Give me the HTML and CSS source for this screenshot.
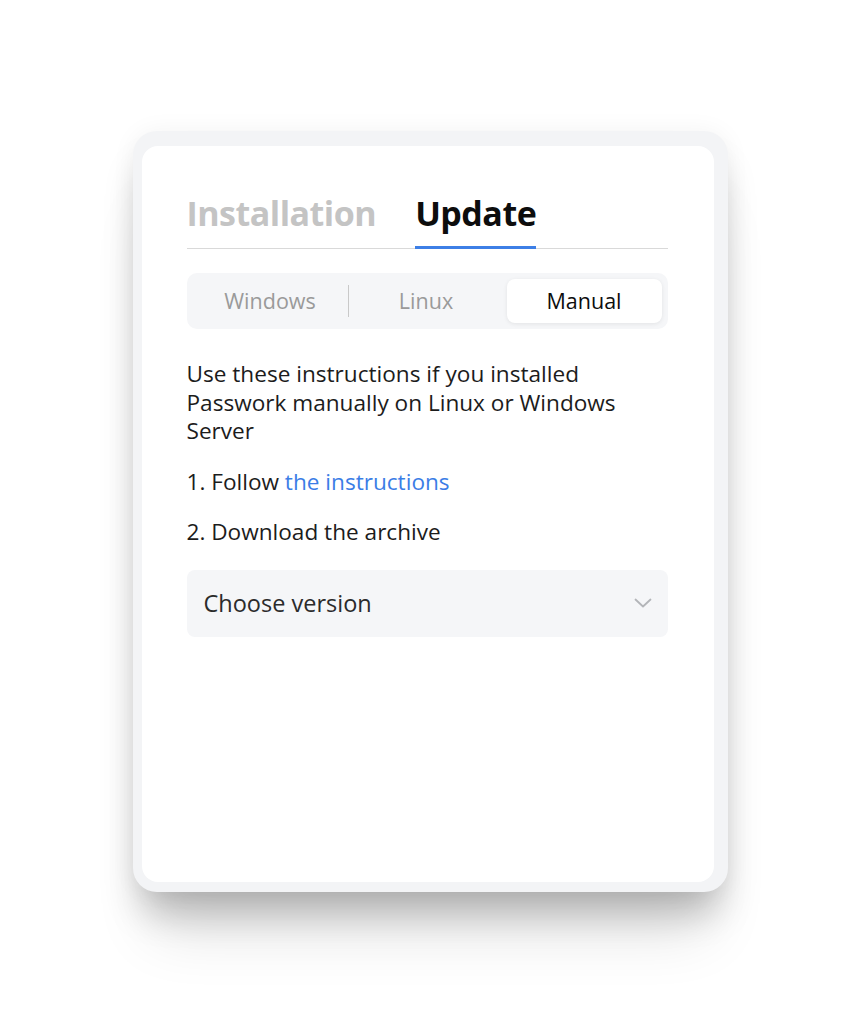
FILE: index.html
```html
<!DOCTYPE html>
<html lang="en">
<head>
<meta charset="utf-8">
<title>Update</title>
<link rel="stylesheet" href="styles.css">
</head>
<body>
<div class="stage">
  <div class="frame">
    <div class="card">
      <div class="tabs">
        <div class="tab">Installation</div>
        <div class="tab tab-active">Update</div>
      </div>
      <div class="segmented">
        <div class="seg">Windows</div>
        <div class="seg-divider"></div>
        <div class="seg">Linux</div>
        <div class="seg seg-active">Manual</div>
      </div>
      <p class="intro">Use these instructions if you installed Passwork manually on Linux or Windows Server</p>
      <p class="step">1. Follow <a class="link" href="#">the instructions</a></p>
      <p class="step">2. Download the archive</p>
      <div class="select">
        <span class="select-label">Choose version</span>
        <svg class="chevron" width="18" height="10" viewBox="0 0 18 10"><path d="M1.5 1.5 L9 8.5 L16.5 1.5" fill="none" stroke="#b3b5b9" stroke-width="1.8" stroke-linecap="round" stroke-linejoin="round"/></svg>
      </div>
    </div>
  </div>
</div>
</body>
</html>
```
FILE: styles.css
```css
* { box-sizing: border-box; }
html, body { margin: 0; padding: 0; background: #ffffff; }
body { font-family: "Open Sans", "Noto Sans", sans-serif; color: #1c1c1c; }

.stage {
  display: flex;
  justify-content: center;
  align-items: flex-start;
  padding-top: 131px;
  min-height: 100vh;
}

.frame {
  width: 595px;
  background: #f3f4f6;
  border-radius: 24px;
  padding: 15px 14px 10px 9px;
  box-shadow: 0 28px 36px -8px rgba(0, 0, 0, 0.22), 0 60px 60px -20px rgba(0, 0, 0, 0.12), 0 0 24px rgba(0, 0, 0, 0.05);
}

.card {
  background: #ffffff;
  border-radius: 16px;
  height: 736px;
  padding: 46px 46px 0 45px;
}

.tabs {
  display: flex;
  gap: 39px;
  border-bottom: 1px solid #d9d9d9;
}

.tab {
  font-size: 34px;
  font-weight: 700;
  line-height: 42px;
  padding-bottom: 14px;
  color: #c4c4c4;
  letter-spacing: -0.5px;
}

.tab-active {
  color: #0d0d0d;
  border-bottom: 3px solid #3d7fe6;
  margin-bottom: -1px;
  padding-bottom: 12px;
}

.segmented {
  margin-top: 24px;
  display: flex;
  align-items: center;
  background: #f5f6f8;
  border-radius: 10px;
  padding: 6px;
  height: 56px;
}

.seg {
  flex: 1;
  text-align: center;
  font-size: 21.5px;
  font-weight: 500;
  color: #9a9a9a;
  line-height: 44px;
}

.seg-divider {
  width: 1px;
  height: 32px;
  background: #c9c9c9;
}

.seg-active {
  background: #ffffff;
  color: #0d0d0d;
  border-radius: 8px;
  box-shadow: 0 1px 4px rgba(0, 0, 0, 0.08);
  margin-left: 3px;
}

.intro {
  margin: 31px 0 0 0;
  font-size: 22.6px;
  line-height: 28.5px;
}

.step {
  margin: 22px 0 0 0;
  font-size: 22.6px;
  line-height: 28px;
}

.link {
  color: #3b7de6;
  text-decoration: none;
}

.select {
  margin-top: 24px;
  height: 67px;
  background: #f5f6f8;
  border-radius: 8px;
  display: flex;
  align-items: center;
  justify-content: space-between;
  padding: 0 16px 0 17px;
}

.select-label {
  font-size: 23.5px;
  color: #2b2b2b;
}

.chevron { display: block; }
```
